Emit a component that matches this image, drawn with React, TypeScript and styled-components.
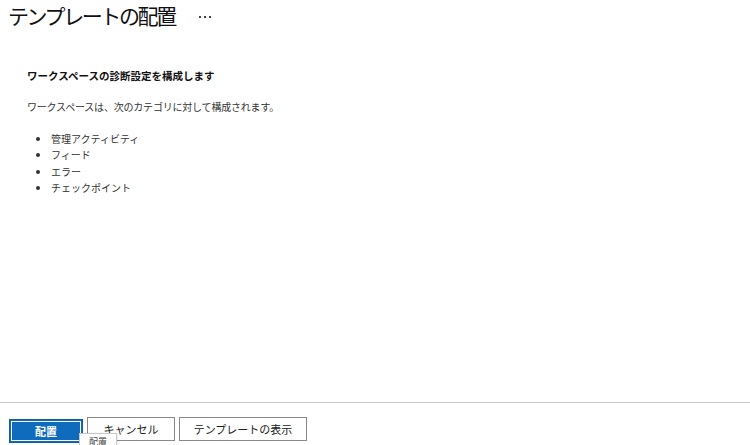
import React from 'react';
import styled, { createGlobalStyle } from 'styled-components';

const GlobalStyle = createGlobalStyle`
    *, *::before, *::after {
        box-sizing: border-box;
    }
    html, body {
        margin: 0;
        padding: 0;
        background: #ffffff;
    }
    body {
        font-family: "Noto Sans CJK JP", "Noto Sans", sans-serif;
        color: #323130;
    }
`;

const categories = ['管理アクティビティ', 'フィード', 'エラー', 'チェックポイント'];

export default function App() {
    return (
        <>
            <GlobalStyle />
            <StyledPage>
                <StyledHeader>
                    <StyledTitle>テンプレートの配置</StyledTitle>
                    <StyledMore>
                        <i />
                        <i />
                        <i />
                    </StyledMore>
                </StyledHeader>
                <StyledContent>
                    <StyledHeading>ワークスペースの診断設定を構成します</StyledHeading>
                    <StyledText>ワークスペースは、次のカテゴリに対して構成されます。</StyledText>
                    <StyledList>
                        {categories.map((item) => (
                            <li key={item}>{item}</li>
                        ))}
                    </StyledList>
                </StyledContent>
                <StyledFooter>
                    <StyledButtonWrap>
                        <StyledButton primary>配置</StyledButton>
                        <StyledTooltip>配置</StyledTooltip>
                    </StyledButtonWrap>
                    <StyledButton>キャンセル</StyledButton>
                    <StyledButton wide>テンプレートの表示</StyledButton>
                </StyledFooter>
            </StyledPage>
        </>
    );
}

const StyledPage = styled.div`
    display: flex;
    flex-direction: column;
    width: 750px;
    height: 445px;
    overflow: hidden;
`;

const StyledHeader = styled.div`
    display: flex;
    align-items: center;
    gap: 24px;
    height: 30px;
    padding-left: 8px;
`;

const StyledTitle = styled.h1`
    margin: 0;
    font-size: 21px;
    font-weight: 400;
    line-height: 30px;
    color: #111111;
    letter-spacing: -2.4px;
`;

const StyledMore = styled.span`
    display: flex;
    gap: 3px;
    margin-top: 3px;

    i {
        width: 2px;
        height: 2px;
        background: #444444;
    }
`;

const StyledContent = styled.div`
    flex: 1;
    padding: 38px 0 0 27px;
`;

const StyledHeading = styled.div`
    font-size: 10.5px;
    font-weight: 700;
    line-height: 16px;
    color: #111111;
`;

const StyledText = styled.div`
    margin-top: 15px;
    font-size: 10px;
    line-height: 16px;
    color: #333333;
    letter-spacing: -0.2px;
`;

const StyledList = styled.ul`
    margin: 16px 0 0;
    padding-left: 24px;
    font-size: 10px;
    line-height: 16.3px;
    color: #333333;
`;

const StyledFooter = styled.div`
    display: flex;
    align-items: flex-start;
    gap: 4px;
    height: 43px;
    padding: 14px 0 0 9px;
    border-top: 1px solid #c8c8c8;
`;

const StyledButtonWrap = styled.div`
    position: relative;
`;

const StyledButton = styled.button<{ primary?: boolean; wide?: boolean }>`
    height: 24px;
    width: ${(p) => (p.primary ? '74px' : p.wide ? '128px' : '88px')};
    padding: 0;
    font-family: "Noto Sans CJK JP", sans-serif;
    font-size: 11px;
    font-weight: ${(p) => (p.primary ? 700 : 400)};
    color: ${(p) => (p.primary ? '#ffffff' : '#222222')};
    background: ${(p) => (p.primary ? '#0f6cbd' : '#ffffff')};
    border: 1px solid ${(p) => (p.primary ? '#0f5ea8' : '#8a8886')};
    outline: ${(p) => (p.primary ? '1px solid #ffffff' : 'none')};
    outline-offset: -3px;
    cursor: pointer;
`;

const StyledTooltip = styled.div`
    position: absolute;
    left: 70px;
    top: 16px;
    width: 38px;
    padding: 2px 0;
    font-size: 9px;
    line-height: 12px;
    text-align: center;
    color: #444444;
    background: #ffffff;
    border: 1px solid #c8c8c8;
    box-shadow: 0 1px 3px rgba(0, 0, 0, 0.15);
`;
